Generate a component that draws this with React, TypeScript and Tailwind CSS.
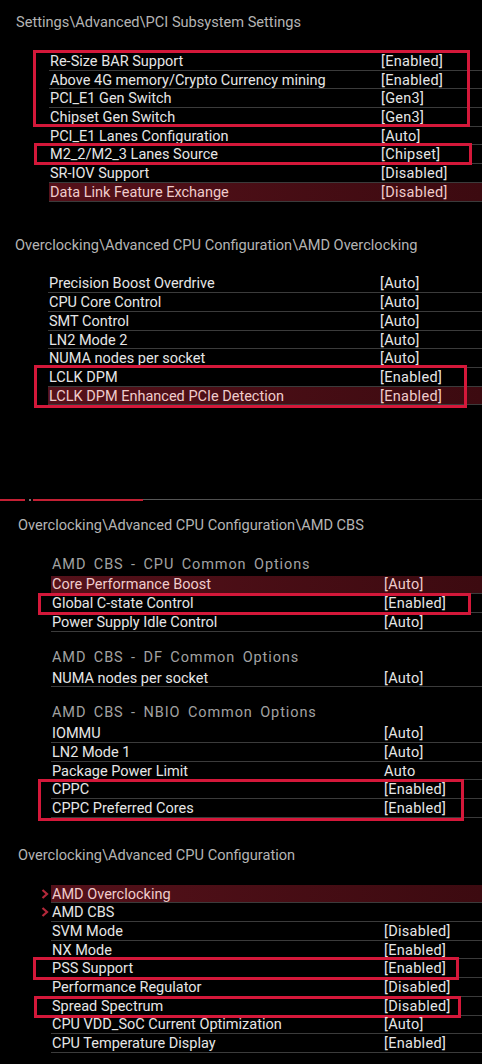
import React from 'react'

type Item = {
  label: string
  value?: string
  hl?: boolean
  arrow?: boolean
}

type Box = {
  from: number
  to: number
  left: number
  right: number
  top: number
  bottom: number
}

const Chevron = () => (
  <svg
    width="8"
    height="10"
    viewBox="0 0 8 10"
    className="absolute left-[-10px] top-[4px]"
  >
    <polyline
      points="1.5,1 6,5 1.5,9"
      fill="none"
      stroke="#b3283a"
      strokeWidth="2.2"
    />
  </svg>
)

const Row = ({ item, labelW }: { item: Item; labelW: number }) => (
  <div
    className={
      item.hl
        ? 'relative flex h-[18.7px] items-center border-b border-[#3b3b3b] bg-linear-to-r from-[#55111a] to-[#3c0a10] pt-[2px] text-[#f0cccc]'
        : 'relative flex h-[18.7px] items-center border-b border-[#3b3b3b] pt-[2px] text-[#e6e6e6]'
    }
  >
    {item.arrow && <Chevron />}
    <div className="shrink-0 pl-[1px]" style={{ width: labelW }}>
      {item.label}
    </div>
    <div className="tracking-[0.3px]">{item.value}</div>
  </div>
)

const RedBox = ({ box }: { box: Box }) => (
  <div
    className="pointer-events-none absolute border-[3px] border-[#d4183a]"
    style={{
      left: box.left,
      right: box.right,
      top: box.top,
      bottom: box.bottom,
    }}
  />
)

// rows split into plain runs and boxed runs
const Rows = ({
  items,
  labelW,
  boxes = [],
}: {
  items: Item[]
  labelW: number
  boxes?: Box[]
}) => {
  const out: React.ReactNode[] = []
  let i = 0
  while (i < items.length) {
    const box = boxes.find((b) => b.from === i)
    if (box) {
      out.push(
        <div key={i} className="relative">
          {items.slice(box.from, box.to + 1).map((it) => (
            <Row key={it.label} item={it} labelW={labelW} />
          ))}
          <RedBox box={box} />
        </div>
      )
      i = box.to + 1
    } else {
      out.push(<Row key={i} item={items[i]} labelW={labelW} />)
      i++
    }
  }
  return <>{out}</>
}

const Header = ({ text, className }: { text: string; className: string }) => (
  <div className={'h-[19px] leading-[19px] text-[14.6px] text-[#b4b4b4] ' + className}>
    {text}
  </div>
)

const SubHeader = ({ text, className }: { text: string; className: string }) => (
  <div
    className={
      'h-[21px] leading-[19px] pl-[1px] text-[14.5px] tracking-[0.9px] text-[#a2a2a2] [word-spacing:3px] ' +
      className
    }
  >
    {text}
  </div>
)

const pci: Item[] = [
  { label: 'Re-Size BAR Support', value: '[Enabled]' },
  { label: 'Above 4G memory/Crypto Currency mining', value: '[Enabled]' },
  { label: 'PCI_E1 Gen Switch', value: '[Gen3]' },
  { label: 'Chipset Gen Switch', value: '[Gen3]' },
  { label: 'PCI_E1 Lanes Configuration', value: '[Auto]' },
  { label: 'M2_2/M2_3 Lanes Source', value: '[Chipset]' },
  { label: 'SR-IOV Support', value: '[Disabled]' },
  { label: 'Data Link Feature Exchange', value: '[Disabled]', hl: true },
]

const amdOc: Item[] = [
  { label: 'Precision Boost Overdrive', value: '[Auto]' },
  { label: 'CPU Core Control', value: '[Auto]' },
  { label: 'SMT Control', value: '[Auto]' },
  { label: 'LN2 Mode 2', value: '[Auto]' },
  { label: 'NUMA nodes per socket', value: '[Auto]' },
  { label: 'LCLK DPM', value: '[Enabled]' },
  { label: 'LCLK DPM Enhanced PCIe Detection', value: '[Enabled]', hl: true },
]

const cbsCpu: Item[] = [
  { label: 'Core Performance Boost', value: '[Auto]', hl: true },
  { label: 'Global C-state Control', value: '[Enabled]' },
  { label: 'Power Supply Idle Control', value: '[Auto]' },
]

const cbsDf: Item[] = [{ label: 'NUMA nodes per socket', value: '[Auto]' }]

const cbsNbio: Item[] = [
  { label: 'IOMMU', value: '[Auto]' },
  { label: 'LN2 Mode 1', value: '[Auto]' },
  { label: 'Package Power Limit', value: 'Auto' },
  { label: 'CPPC', value: '[Enabled]' },
  { label: 'CPPC Preferred Cores', value: '[Enabled]' },
]

const cpuCfg: Item[] = [
  { label: 'AMD Overclocking', hl: true, arrow: true },
  { label: 'AMD CBS', arrow: true },
  { label: 'SVM Mode', value: '[Disabled]' },
  { label: 'NX Mode', value: '[Enabled]' },
  { label: 'PSS Support', value: '[Enabled]' },
  { label: 'Performance Regulator', value: '[Disabled]' },
  { label: 'Spread Spectrum', value: '[Disabled]' },
  { label: 'CPU VDD_SoC Current Optimization', value: '[Auto]' },
  { label: 'CPU Temperature Display', value: '[Enabled]' },
]

export default function App() {
  return (
    <div className="h-[1064px] w-full overflow-hidden bg-black font-['Roboto',sans-serif] text-[14.5px]">

      {/* PCI Subsystem */}
      <Header text="Settings\Advanced\PCI Subsystem Settings" className="ml-[16px] pt-[12.5px] h-[31.5px]" />
      <div className="ml-[49px] mt-[20.5px]">
        <Rows
          items={pci}
          labelW={332}
          boxes={[
            { from: 0, to: 3, left: -16, right: 12, top: -2.5, bottom: 0 },
            { from: 5, to: 5, left: -15, right: 10, top: -2, bottom: -1 },
          ]}
        />
      </div>

      {/* AMD Overclocking */}
      <Header text="Overclocking\Advanced CPU Configuration\AMD Overclocking" className="ml-[15px] mt-[34px]" />
      <div className="ml-[48px] mt-[20px]">
        <Rows
          items={amdOc}
          labelW={332}
          boxes={[{ from: 5, to: 6, left: -14, right: 15, top: -3, bottom: -3 }]}
        />
      </div>

      {/* divider */}
      <div className="mt-[93.5px] flex h-[2px] items-center">
        <div className="h-[2px] w-[25px] bg-[#c42034]" />
        <div className="ml-[4px] h-[2px] w-[2px] bg-[#777]" />
        <div className="ml-[2px] h-[2px] w-[110px] bg-[#c42034]" />
        <div className="h-[1px] flex-1 bg-linear-to-r from-[#5a5a5a] to-[#2c2c2c]" />
      </div>

      {/* AMD CBS */}
      <Header text="Overclocking\Advanced CPU Configuration\AMD CBS" className="ml-[18px] mt-[15.5px]" />
      <div className="ml-[51px]">
        <SubHeader text="AMD CBS - CPU Common Options" className="mt-[19.2px]" />
        <Rows
          items={cbsCpu}
          labelW={333}
          boxes={[{ from: 1, to: 1, left: -13, right: 11, top: -1, bottom: -2 }]}
        />
        <SubHeader text="AMD CBS - DF Common Options" className="mt-[16px]" />
        <Rows items={cbsDf} labelW={333} />
        <SubHeader text="AMD CBS - NBIO Common Options" className="mt-[16px]" />
        <Rows
          items={cbsNbio}
          labelW={333}
          boxes={[{ from: 3, to: 4, left: -13, right: 18, top: -1.5, bottom: -3 }]}
        />
      </div>

      {/* Advanced CPU Configuration */}
      <Header text="Overclocking\Advanced CPU Configuration" className="ml-[18px] mt-[28px]" />
      <div className="ml-[51px] mt-[20px]">
        <Rows
          items={cpuCfg}
          labelW={333}
          boxes={[
            { from: 4, to: 4, left: -18, right: 23, top: -2, bottom: -2 },
            { from: 6, to: 6, left: -17, right: 21, top: -1, bottom: -2 },
          ]}
        />
      </div>
    </div>
  )
}
